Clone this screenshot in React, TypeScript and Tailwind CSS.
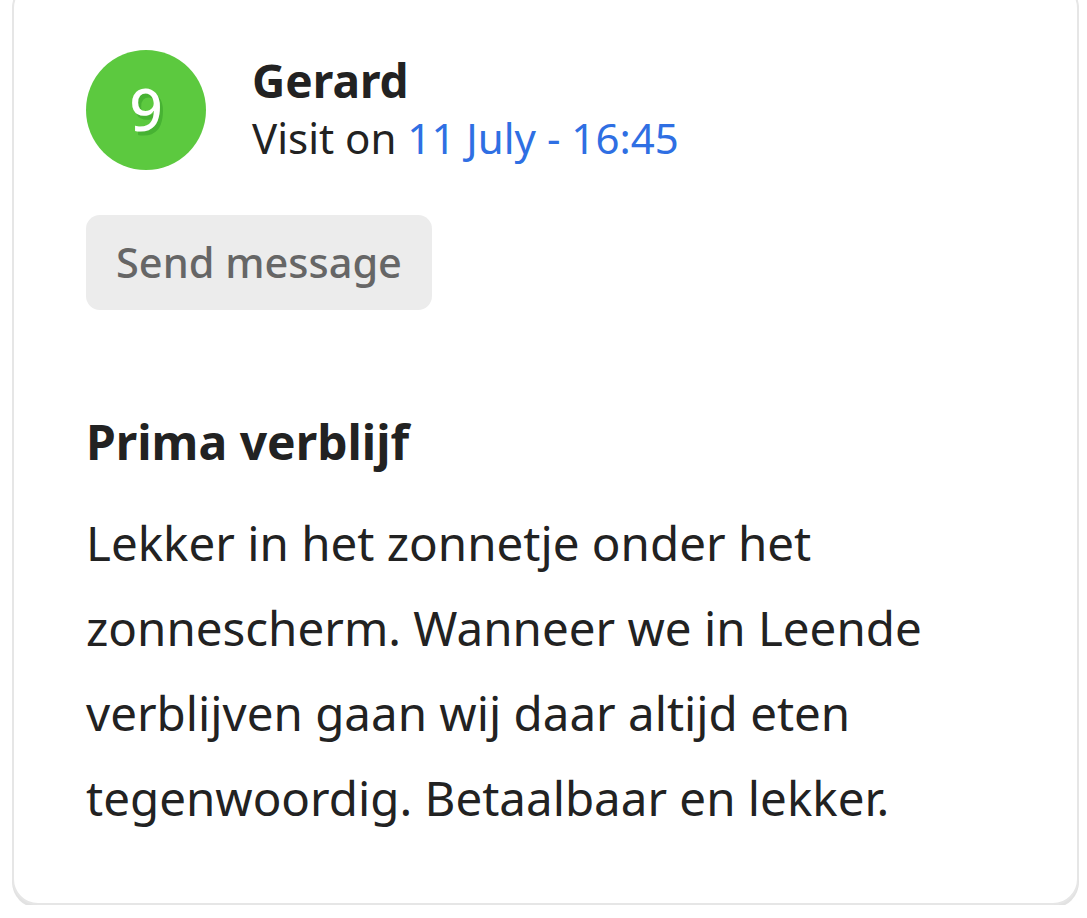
export default function App() {
  return (
    <div
      className="min-h-screen bg-white pl-[12px] pr-[8px]"
      style={{ fontFamily: '"Noto Sans", "Open Sans", sans-serif' }}
    >
      <div className="-mt-[18px] h-[923px] rounded-[26px] border-2 border-[#e6e6e6] bg-white pt-[66px] pl-[72px] pr-10 shadow-[0_3px_0_#e2e2e2]">
        <div className="flex items-center gap-[46px]">
          <div className="flex h-[120px] w-[120px] shrink-0 items-center justify-center rounded-full bg-[#5cc93f]">
            <span className="-mt-[2px] text-[58px] font-medium leading-none text-white [text-shadow:3px_4px_0_#47b233]">
              9
            </span>
          </div>
          <div className="-mt-[2px]">
            <div className="text-[46px] font-bold leading-[58px] text-[#222]">Gerard</div>
            <div className="text-[42px] leading-[58px] text-[#222]">
              Visit on <span className="text-[#2f6fe3]">11 July - 16:45</span>
            </div>
          </div>
        </div>
        <button className="mt-[45px] h-[95px] rounded-[14px] bg-[#ececec] px-[30px] text-[41.5px] font-medium text-[#666]">
          Send message
        </button>
        <h2 className="mt-[102px] text-[48px] font-bold leading-[60px] text-[#222]">Prima verblijf</h2>
        <p className="mt-[28px] max-w-[900px] text-[47.5px] leading-[85px] text-[#222]">
          Lekker in het zonnetje onder het zonnescherm. Wanneer we in Leende verblijven gaan wij daar altijd eten tegenwoordig. Betaalbaar en lekker.
        </p>
      </div>
    </div>
  );
}
